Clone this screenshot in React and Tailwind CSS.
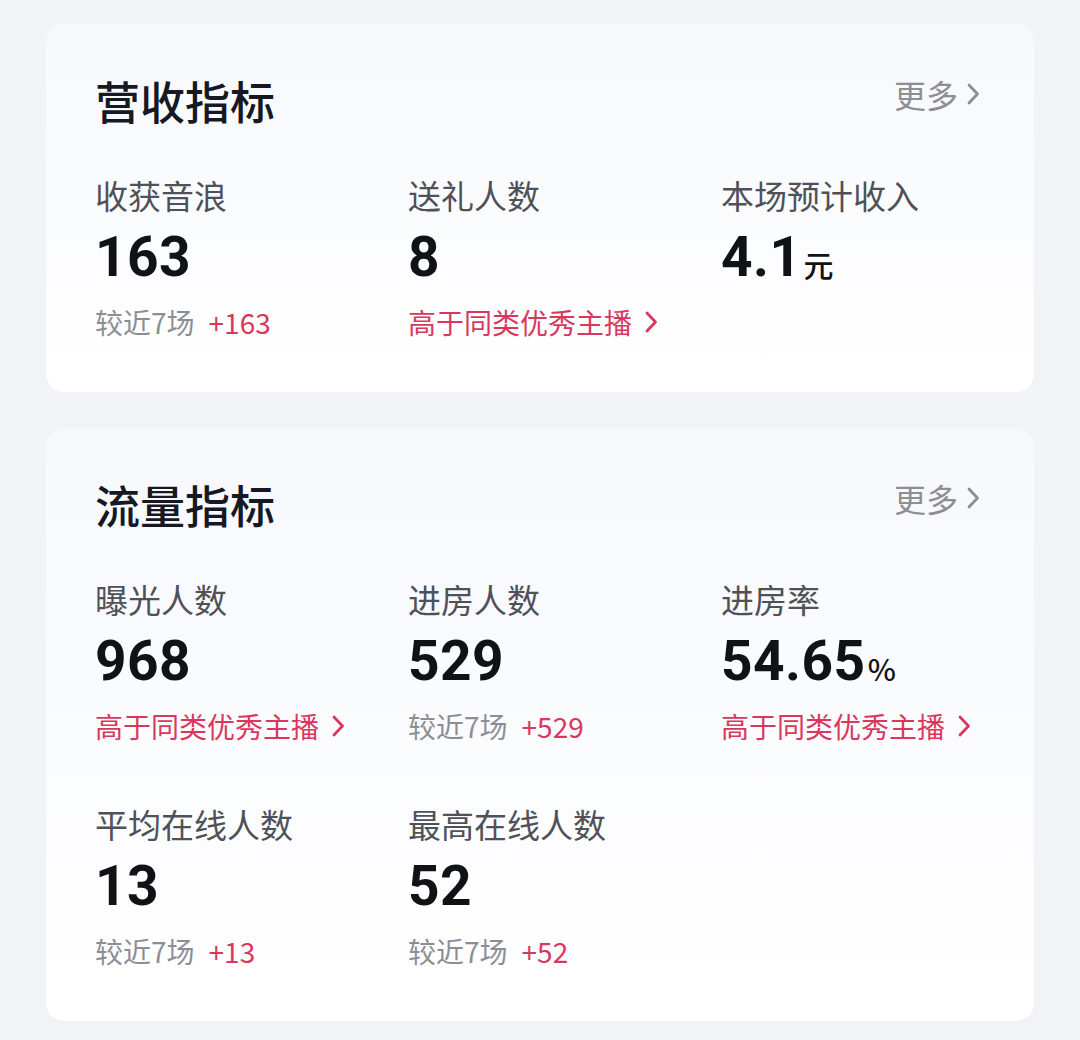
import React from "react";

const CJK = { fontFamily: '"Noto Sans CJK SC", "Noto Sans", sans-serif' };
const NUM = { fontFamily: 'Roboto, "Noto Sans CJK SC", sans-serif' };

function Chevron({ color, className }) {
  return (
    <svg className={className} viewBox="0 0 14 24" fill="none" stroke={color} strokeWidth="2.8" strokeLinecap="round" strokeLinejoin="round">
      <path d="M3 3 L11.5 12 L3 21" />
    </svg>
  );
}

function Metric({ label, value, unit, sub }) {
  return (
    <div className="w-[313px] flex flex-col">
      <div className="h-[44px] leading-[44px] text-[33px] text-[#4f5159]" style={CJK}>{label}</div>
      <div className="mt-[8px] h-[64px] flex items-end">
        <span className="text-[55px] leading-[64px] font-bold text-[#111216] tracking-[0.5px]" style={NUM}>{value}</span>
        {unit && (
          <span className="text-[30px] leading-[50px] font-medium text-[#111216] ml-[2px]" style={CJK}>{unit}</span>
        )}
      </div>
      {sub && (
        <div className="mt-[13px] h-[40px] flex items-center text-[28px]" style={CJK}>
          {sub.type === "cmp" ? (
            <>
              <span className="text-[#8b8e95]">较近7场</span>
              <span className="ml-[14px] text-[#d9385e]">{sub.value}</span>
            </>
          ) : (
            <>
              <span className="text-[#d9385e]">高于同类优秀主播</span>
              <Chevron color="#d9385e" className="ml-[12px] w-[14px] h-[24px]" />
            </>
          )}
        </div>
      )}
    </div>
  );
}

function Card({ title, children }) {
  return (
    <div className="rounded-[18px] bg-gradient-to-b from-[#f7f8fc] to-white pl-[49px] pt-[49px] pb-[50px]">
      <div className="flex items-center justify-between h-[56px] pr-[54px]">
        <div className="text-[45px] leading-[56px] font-medium text-[#161823]" style={CJK}>{title}</div>
        <div className="flex items-center -mt-[14px]">
          <span className="text-[32px] text-[#8c8e94]" style={CJK}>更多</span>
          <Chevron color="#8c8e94" className="ml-[8px] w-[14px] h-[24px]" />
        </div>
      </div>
      <div className="mt-[44px] flex flex-col gap-[56px]">{children}</div>
    </div>
  );
}

export default function App() {
  return (
    <div className="w-[1080px] h-[1040px] bg-[#f2f3f7] px-[46px] pt-[24px] flex flex-col gap-[36px]">
      <Card title="营收指标">
        <div className="flex">
          <Metric label="收获音浪" value="163" sub={{ type: "cmp", value: "+163" }} />
          <Metric label="送礼人数" value="8" sub={{ type: "high" }} />
          <Metric label="本场预计收入" value="4.1" unit="元" />
        </div>
      </Card>
      <Card title="流量指标">
        <div className="flex">
          <Metric label="曝光人数" value="968" sub={{ type: "high" }} />
          <Metric label="进房人数" value="529" sub={{ type: "cmp", value: "+529" }} />
          <Metric label="进房率" value="54.65" unit="%" sub={{ type: "high" }} />
        </div>
        <div className="flex">
          <Metric label="平均在线人数" value="13" sub={{ type: "cmp", value: "+13" }} />
          <Metric label="最高在线人数" value="52" sub={{ type: "cmp", value: "+52" }} />
        </div>
      </Card>
    </div>
  );
}
